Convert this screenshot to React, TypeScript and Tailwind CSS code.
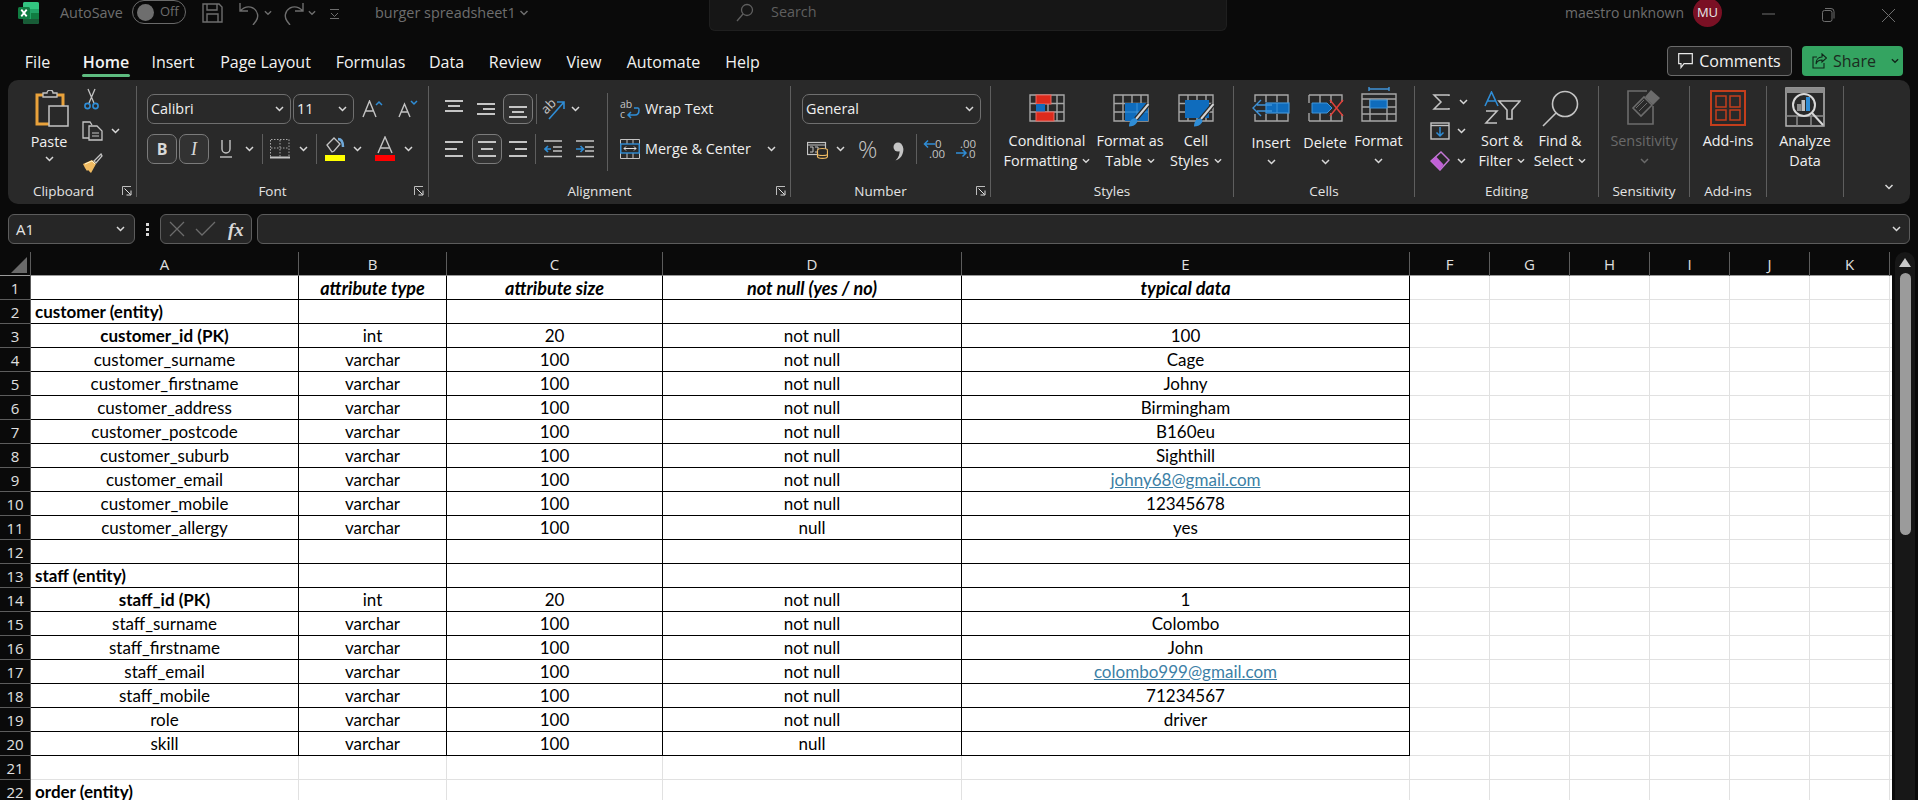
import React from "react";

const GRAY = "#c4c4c4";
const BLUE = "#2f8dd6";

const Chev = ({ color = "#d8d8d8", w = 9 }: { color?: string; w?: number }) => (
  <svg width={w} height={6} viewBox="0 0 9 6" className="shrink-0">
    <path d="M1 1l3.5 3.5L8 1" fill="none" stroke={color} strokeWidth="1.5" />
  </svg>
);

const Launcher = () => (
  <svg width="10" height="10" viewBox="0 0 10 10">
    <path d="M.5 9V.5H9" fill="none" stroke="#bdbdbd" />
    <path d="M2.5 2.5L8.5 8.5M9 4.5V9H4.5" fill="none" stroke="#e0e0e0" />
  </svg>
);

const ExcelLogo = () => (
  <svg width="21" height="22" viewBox="0 0 21 22">
    <rect x="5" y="0" width="16" height="22" rx="2" fill="#21a366" />
    <path d="M5 2a2 2 0 012-2h12a2 2 0 012 2v5H5z" fill="#33c481" />
    <path d="M13 11h8v6h-8z" fill="#107c41" />
    <path d="M5 17h16v3a2 2 0 01-2 2H7a2 2 0 01-2-2z" fill="#185c37" />
    <rect x="0" y="5" width="12" height="12" rx="1.5" fill="#107c41" />
    <path d="M3.3 7.6l5.4 6.8M8.7 7.6l-5.4 6.8" stroke="#fff" strokeWidth="1.8" />
  </svg>
);

const PasteIcon = () => (
  <svg width="34" height="37" viewBox="0 0 34 37">
    <path d="M2 5h26v29H2z" fill="none" stroke="#e9a23b" strokeWidth="3" />
    <path d="M8 6V3h4a3 3 0 016 0h4v4H8z" fill="#292929" stroke={GRAY} strokeWidth="1.3" />
    <rect x="14" y="16" width="19" height="20" fill="#292929" stroke={GRAY} strokeWidth="1.5" />
  </svg>
);

const ScissorsIcon = () => (
  <svg width="15" height="22" viewBox="0 0 15 22">
    <path d="M4 1l6 14M11 1L5 15" stroke={GRAY} strokeWidth="1.3" fill="none" />
    <circle cx="3.5" cy="18" r="2.6" fill="none" stroke={BLUE} strokeWidth="1.6" />
    <circle cx="11.5" cy="18" r="2.6" fill="none" stroke={BLUE} strokeWidth="1.6" />
  </svg>
);

const CopyIcon = () => (
  <svg width="21" height="20" viewBox="0 0 21 20">
    <path d="M9 17H1V1h7l2 3" fill="none" stroke={GRAY} strokeWidth="1.3" />
    <path d="M7 5h8l5 5v9H7z" fill="#292929" stroke={GRAY} strokeWidth="1.3" />
    <path d="M10 12h7M10 15h7" stroke={GRAY} />
  </svg>
);

const BrushIcon = () => (
  <svg width="21" height="21" viewBox="0 0 21 21">
    <path d="M12 8l7-7 1 2-6 7z" fill="none" stroke={GRAY} strokeWidth="1.3" />
    <path d="M1 11l9-4 4 4-5 9-3-3-1 1-2-3z" fill="#f0bb62" />
    <path d="M3 11l7-3 3 3" fill="none" stroke="#fff2c9" />
  </svg>
);

const AUp = ({ big, up }: { big: boolean; up: boolean }) => (
  <svg width="22" height="18" viewBox="0 0 22 18">
    <path
      d={big ? "M1 17L7.5 1 14 17M3.5 11h8" : "M2 17L7.5 4 13 17M4 12h7"}
      fill="none"
      stroke={GRAY}
      strokeWidth="1.4"
    />
    <path d={up ? "M14 5l3-3 3 3" : "M14 1l3 3 3-3"} fill="none" stroke={BLUE} strokeWidth="1.5" />
  </svg>
);

const UIcon = () => (
  <svg width="12" height="20" viewBox="0 0 12 20">
    <path d="M2 1v9a4 4 0 008 0V1" fill="none" stroke={GRAY} strokeWidth="1.4" />
    <path d="M0 18h12" stroke={GRAY} strokeWidth="1.4" />
  </svg>
);

const BorderIcon = () => (
  <svg width="20" height="20" viewBox="0 0 20 20">
    <path d="M1 .5h18v17M.5 1v17M10 1v17M1 9h18" fill="none" stroke="#a8a8a8" strokeDasharray="1.5 1.5" />
    <path d="M0 18.5h20" stroke={GRAY} strokeWidth="2" />
  </svg>
);

const FillIcon = () => (
  <svg width="21" height="26" viewBox="0 0 21 26">
    <path d="M2 9l7-7 6 6-6 7-2 1z" fill="none" stroke={GRAY} strokeWidth="1.3" />
    <path d="M13 3c3 0 5 3 5 8" fill="none" stroke="#6fa8d8" strokeWidth="2.5" />
    <rect x="0" y="19" width="20" height="6" fill="#ffff00" />
  </svg>
);

const FontColorIcon = () => (
  <svg width="20" height="26" viewBox="0 0 20 26">
    <path d="M3 17L10 1l7 16M5.5 12h9" fill="none" stroke={GRAY} strokeWidth="1.4" />
    <rect x="0" y="19" width="20" height="6" fill="#ff0000" />
  </svg>
);

const Lines = ({ kind, h = 13, gap = 5 }: { kind: "l" | "c" | "r"; h?: number; gap?: number }) => {
  const w = [18, 12, 18];
  return (
    <svg width="18" height={h} viewBox={`0 0 18 ${h}`}>
      {w.map((len, i) => {
        const x = kind === "l" ? 0 : kind === "c" ? (18 - len) / 2 : 18 - len;
        return <rect key={i} x={x} y={i * gap} width={len} height="2" fill={GRAY} />;
      })}
    </svg>
  );
};

const IndentIcon = ({ right }: { right: boolean }) => (
  <svg width="18" height="18" viewBox="0 0 18 18">
    <path d="M0 1h18M9 7h9M9 11h9M0 16.5h18" stroke={GRAY} strokeWidth="1.6" />
    <path d={right ? "M0 9h7M4.5 6l3 3-3 3" : "M7 9H1M4 6L1 9l3 3"} fill="none" stroke={BLUE} strokeWidth="1.6" />
  </svg>
);

const OrientIcon = () => (
  <svg width="24" height="24" viewBox="0 0 24 24" className="overflow-visible">
    <text x="0" y="14" fontSize="13" fill={GRAY} fontFamily="Open Sans, sans-serif" transform="rotate(-45 6 12)">
      ab
    </text>
    <path d="M6 22L21 5M14 5h7v7" fill="none" stroke={BLUE} strokeWidth="1.6" />
  </svg>
);

const WrapIcon = () => (
  <svg width="20" height="20" viewBox="0 0 20 20" className="overflow-visible">
    <text x="0" y="8.5" fontSize="10.5" fill={GRAY} fontFamily="Open Sans, sans-serif">
      ab
    </text>
    <text x="0" y="19" fontSize="10.5" fill={GRAY} fontFamily="Open Sans, sans-serif">
      c
    </text>
    <path d="M14 9h4c1 0 1 0 1 2 0 4-2 5-4 5H8M11 13l-3 3 3 3" fill="none" stroke={BLUE} strokeWidth="1.5" />
  </svg>
);

const MergeIcon = () => (
  <svg width="20" height="20" viewBox="0 0 20 20">
    <path d="M.5.5h19v19H.5zM7 .5v5M13 .5v5M7 14v5M13 14v5" fill="none" stroke={GRAY} />
    <rect x=".8" y="5" width="18.4" height="9" fill="#292929" stroke={BLUE} strokeWidth="1.4" />
    <path d="M4 9.5h12M6 7.5l-2 2 2 2M14 7.5l2 2-2 2" fill="none" stroke="#e0e0e0" />
  </svg>
);

const CurrencyIcon = () => (
  <svg width="21" height="19" viewBox="0 0 21 19">
    <rect x=".5" y="2.5" width="18" height="12" fill="none" stroke={GRAY} strokeWidth="1.2" />
    <path d="M.5 5h18" stroke={GRAY} />
    <path d="M3 7h3v5H3M8 7h3v5H8" fill="none" stroke={GRAY} />
    <ellipse cx="15.5" cy="10.5" rx="5" ry="2" fill="#292929" stroke="#f0bb62" strokeWidth="1.2" />
    <path d="M10.5 10.5v6c0 2.500 10 2.500 10 0v-6M10.500 14c0 2 10 2 10 0" fill="#292929" stroke="#f0bb62" strokeWidth="1.2" />
  </svg>
);

const CommaIcon = () => (
  <svg width="11" height="19" viewBox="0 0 11 19">
    <circle cx="5" cy="5" r="4.500" fill={GRAY} />
    <path d="M7 2c4 2 4 6 2.500 10C8.500 15 6 17.500 2.500 18.500 5.500 15.500 7 12 6.500 8.500z" fill={GRAY} />
  </svg>
);

const DecIcon = ({ inc }: { inc: boolean }) => (
  <svg width="20" height="20" viewBox="0 0 20 20" className="overflow-visible">
    {inc ? (
      <>
        <text x="4" y="9" fontSize="11.5" fill={GRAY} fontFamily="Open Sans, sans-serif">
          .00
        </text>
        <text x="10" y="19" fontSize="11.5" fill={GRAY} fontFamily="Open Sans, sans-serif">
          .0
        </text>
        <path d="M0 14h10M6.500 10.500l3.500 3.500-3.500 3.500" fill="none" stroke={BLUE} strokeWidth="1.5" />
      </>
    ) : (
      <>
        <text x="11" y="9" fontSize="11.5" fill={GRAY} fontFamily="Open Sans, sans-serif">
          0
        </text>
        <text x="5" y="19" fontSize="11.5" fill={GRAY} fontFamily="Open Sans, sans-serif">
          .00
        </text>
        <path d="M0 5h11M4 1.500L.5 5 4 8.500" fill="none" stroke={BLUE} strokeWidth="1.5" />
      </>
    )}
  </svg>
);

const GridBase = () => (
  <path d="M1 1h34v26H1zM10 1v26M19 1v26M28 1v26M1 9.500h34M1 18h34" fill="none" stroke="#a6a6a6" strokeWidth="1.4" />
);

const CondIcon = () => (
  <svg width="36" height="28" viewBox="0 0 36 28">
    <GridBase />
    <rect x="7" y="1" width="15" height="9" fill="#dc2a1c" stroke="#e86a62" />
    <rect x="7" y="10" width="9" height="8" fill="#0f6cbd" />
    <rect x="7" y="18" width="18" height="9" fill="#dc2a1c" stroke="#e86a62" />
  </svg>
);

const BrushOver = () => (
  <>
    <path d="M23 25L35.500 10" stroke="#292929" strokeWidth="4.500" />
    <path d="M23 25L35.500 10" stroke="#d4d4d4" strokeWidth="2" />
    <path d="M16 32.500c0-4 2-8 5-8 3 0 4 2 3 4-2 3-5 4-8 4z" fill="#2f8dd6" />
  </>
);

const TableIcon = () => (
  <svg width="37" height="33" viewBox="0 0 37 33" className="mb-[-5px] ml-[3px]">
    <GridBase />
    <rect x="12" y="9" width="23" height="18" fill="#0f6cbd" />
    <path d="M24 9v18M12 18h23" stroke="#3f93d8" />
    <BrushOver />
  </svg>
);

const CellStyleIcon = () => (
  <svg width="37" height="33" viewBox="0 0 37 33" className="mb-[-5px]">
    <GridBase />
    <rect x="7" y="6" width="24" height="18" fill="#0f6cbd" />
    <BrushOver />
  </svg>
);

const InsertIcon = () => (
  <svg width="38" height="28" viewBox="0 0 38 28">
    <path d="M3 8V1h33v26H3v-7M14 1v7M25 1v7M14 20v7M25 20v7" fill="none" stroke="#a6a6a6" strokeWidth="1.4" />
    <rect x="14" y="9" width="23" height="10" fill="#0f6cbd" stroke="#3f93d8" strokeWidth="1.2" />
    <path d="M25 9v10" stroke="#3f93d8" />
    <path d="M20 11H5M20 17H5M9 6l-8 8 8 8" fill="none" stroke="#3f93d8" strokeWidth="1.4" />
  </svg>
);

const DeleteIcon = () => (
  <svg width="38" height="28" viewBox="0 0 38 28">
    <path d="M3 1h33v7M3 27h33v-7M3 1v8M3 19v8M14 1v8M25 1v8M14 19v8M25 19v8" fill="none" stroke="#a6a6a6" strokeWidth="1.4" />
    <path d="M6 9h15l5 5-5 5H6z" fill="#0f6cbd" stroke="#3f93d8" />
    <path d="M24 6l13 16M37 6L24 22" stroke="#e0403a" strokeWidth="1.5" />
  </svg>
);

const FormatIcon = () => (
  <svg width="36" height="35" viewBox="0 0 36 35">
    <path d="M8 2h20M8 0v4M28 0v4" stroke="#3f93d8" strokeWidth="1.4" />
    <path d="M1 7h34v27H1zM1 7v4M1 12h34M1 20h34M1 27h34M9 12v22M26 12v22" fill="none" stroke="#a6a6a6" strokeWidth="1.4" />
    <rect x="9" y="13" width="17" height="8" fill="#0f6cbd" stroke="#3f93d8" />
  </svg>
);

const SigmaIcon = () => (
  <svg width="18" height="16" viewBox="0 0 18 16">
    <path d="M17 2V1H2l7 7-7 7h15v-1" fill="none" stroke={GRAY} strokeWidth="1.5" />
  </svg>
);

const FillDownIcon = () => (
  <svg width="20" height="18" viewBox="0 0 20 18">
    <rect x="1" y="1" width="18" height="16" fill="none" stroke={GRAY} strokeWidth="1.4" />
    <path d="M1 3.500h18" stroke={GRAY} strokeWidth="1.4" />
    <path d="M10 5v9M6.500 10.500L10 14l3.500-3.500" fill="none" stroke={BLUE} strokeWidth="1.5" />
  </svg>
);

const EraserIcon = () => (
  <svg width="20" height="20" viewBox="0 0 20 20">
    <path d="M11 1l8 8-9 10-9-9z" fill="none" stroke="#c478d6" strokeWidth="1.5" />
    <path d="M6 5.500l7.500 8L10 19l-9-9z" fill="#c060d6" />
  </svg>
);

const SortIcon = () => (
  <svg width="37" height="34" viewBox="0 0 37 34">
    <path d="M1 15L7.500 1 14 15M3.500 10h8" fill="none" stroke={BLUE} strokeWidth="1.6" />
    <path d="M2 20h11L2 32h11" fill="none" stroke={GRAY} strokeWidth="1.6" />
    <path d="M15 10h21l-8 9v9h-5v-9z" fill="none" stroke={GRAY} strokeWidth="1.6" />
  </svg>
);

const FindIcon = () => (
  <svg width="37" height="37" viewBox="0 0 37 37" className="mb-[-2px]">
    <circle cx="23" cy="14" r="12.500" fill="none" stroke={GRAY} strokeWidth="1.6" />
    <path d="M14 23L1 36" stroke={GRAY} strokeWidth="1.6" />
  </svg>
);

const SensitivityIcon = () => (
  <svg width="34" height="37" viewBox="0 0 34 37">
    <path d="M20 3H1v33h25V18" fill="none" stroke="#6c6c6c" strokeWidth="1.6" />
    <path d="M6 20l11-11 8 8-11 11z" fill="#292929" stroke="#6c6c6c" strokeWidth="1.6" />
    <path d="M9 20l8-8M12 23l8-8" stroke="#6c6c6c" />
    <path d="M18 9l6-7 9 8-7 7z" fill="#6c6c6c" />
  </svg>
);

const AddinsIcon = () => (
  <svg width="36" height="36" viewBox="0 0 36 36" className="mb-[-1px]">
    <rect x="1" y="1" width="34" height="34" fill="none" stroke="#c43e1c" strokeWidth="2" />
    <path d="M6 6h10v11H6zM20 6h10v11H20zM6 20h10v10H6zM20 20h10v10H20z" fill="none" stroke="#c43e1c" strokeWidth="1.5" />
  </svg>
);

const AnalyzeIcon = () => (
  <svg width="40" height="40" viewBox="0 0 40 40" className="mb-[-2px]">
    <path d="M1 1h38v38H1z" fill="none" stroke="#b5b5b5" strokeWidth="1.5" />
    <rect x="1" y="1" width="38" height="5" fill="#8c8c8c" />
    <path d="M1 29h38M12 29v10M26 29v10" stroke="#8c8c8c" strokeWidth="1.5" />
    <circle cx="19" cy="18" r="11" fill="#292929" stroke="#d8d8d8" strokeWidth="2" />
    <rect x="12" y="17" width="4" height="7" fill="#8c8c8c" />
    <rect x="16.500" y="13" width="3.500" height="11" fill="#c0c0c0" />
    <rect x="21" y="10" width="4" height="14" fill="#2f8dd6" />
    <path d="M27 26l11 12" stroke="#d8d8d8" strokeWidth="2" />
  </svg>
);

const Combo = ({ label, w }: { label: string; w: string }) => (
  <div className={`${w} h-[30px] flex items-center justify-between pl-[3px] pr-[6px] border border-[#6f6f6f] rounded-[7px] text-[14.4px] text-[#f0f0f0]`}>
    <span>{label}</span>
    <Chev />
  </div>
);

const ToggleBtn = ({ children }: { children: React.ReactNode }) => (
  <div className="w-[30px] h-[30px] flex items-center justify-center border border-[#7b7b7b] rounded-[7px] bg-[#323232]">
    {children}
  </div>
);

const Sep = ({ h = "h-[30px]" }: { h?: string }) => <div className={`w-px ${h} bg-[#5e5e5e]`} />;

const Group = ({
  w,
  label,
  launcher,
  pr = "pr-0",
  children,
}: {
  w: string;
  label?: string;
  launcher?: boolean;
  pr?: string;
  children: React.ReactNode;
}) => (
  <div className={`${w} h-[111px] shrink-0 flex flex-col border-r border-[#5e5e5e]`}>
    <div className="h-[95px] flex">{children}</div>
    <div className={`relative h-[16px] ${pr} text-center text-[13.5px] leading-[21px] text-[#e4e4e4]`}>
      {label}
      {launcher && (
        <span className="absolute right-[4px] top-[5px]">
          <Launcher />
        </span>
      )}
    </div>
  </div>
);

const BigBtn = ({
  w,
  icon,
  iconBox = "h-[34px]",
  labelGap = "mt-[9px]",
  chevBox = "h-[19px]",
  lines,
  chev = true,
  muted,
  inline,
}: {
  w: string;
  icon: React.ReactNode;
  iconBox?: string;
  labelGap?: string;
  chevBox?: string;
  lines: string[];
  chev?: boolean;
  muted?: boolean;
  inline?: boolean;
}) => (
  <div className={`${w} flex flex-col items-center text-[14.4px] leading-[20px] whitespace-nowrap ${muted ? "text-[#6a6a6a]" : "text-[#f0f0f0]"}`}>
    <div className={`${iconBox} flex items-end justify-center`}>{icon}</div>
    <div className={labelGap}>{lines[0]}</div>
    {lines[1] ? (
      <div className="flex items-center gap-[5px]">
        {lines[1]}
        {inline && <Chev w={8} />}
      </div>
    ) : chev ? (
      <div className={`${chevBox} flex items-center`}>
        <Chev color={muted ? "#6a6a6a" : "#d8d8d8"} />
      </div>
    ) : null}
  </div>
);

const tabs = [
  { t: "File", c: "w-[25px] ml-[25px]" },
  { t: "Home", c: "w-[48px] ml-[32px] font-semibold" },
  { t: "Insert", c: "w-[42px] ml-[22px]" },
  { t: "Page Layout", c: "w-[93px] ml-[25px]" },
  { t: "Formulas", c: "w-[69px] ml-[24px]" },
  { t: "Data", c: "w-[35px] ml-[24px]" },
  { t: "Review", c: "w-[52px] ml-[25px]" },
  { t: "View", c: "w-[36px] ml-[25px]" },
  { t: "Automate", c: "w-[75px] ml-[24px]" },
  { t: "Help", c: "w-[35px] ml-[24px]" },
];

const TitleBar = () => (
  <div className="h-[40px] flex items-start text-[14.4px] text-[#6e6e6e] whitespace-nowrap">
    <div className="ml-[18px] mt-[2px]">
      <ExcelLogo />
    </div>
    <span className="ml-[21px] mt-[2px] w-[71px]">AutoSave</span>
    <div className="w-[54px] h-[24px] flex items-center gap-[6px] px-[4px] border border-[#6a6a6a] rounded-full text-[13px] ml-[1px]">
      <span className="w-[17px] h-[17px] rounded-full bg-[#6e6e6e]" />
      Off
    </div>
    <svg width="21" height="20" viewBox="0 0 21 20" className="ml-[16px] mt-[3px]">
      <path d="M1 1h16l3 3v15H1zM5 1v6h10V1M5 19v-8h11v8" fill="none" stroke="#6e6e6e" strokeWidth="1.4" />
    </svg>
    <svg width="23" height="24" viewBox="0 0 23 24" className="ml-[15px] mt-[1px]">
      <path d="M2 2v8h8M2 10c4-4 9-5 13-3 5 3 6 9 3 13l-3 4" fill="none" stroke="#6e6e6e" strokeWidth="1.4" />
    </svg>
    <div className="ml-[3px] mt-[10px]"><Chev color="#6e6e6e" w={8} /></div>
    <svg width="23" height="24" viewBox="0 0 23 24" className="ml-[10px] mt-[1px]">
      <path d="M21 2v8h-8M21 10c-4-4-9-5-13-3-5 3-6 9-3 13l3 4" fill="none" stroke="#6e6e6e" strokeWidth="1.4" />
    </svg>
    <div className="ml-[3px] mt-[10px]"><Chev color="#6e6e6e" w={8} /></div>
    <svg width="9" height="10" viewBox="0 0 9 10" className="ml-[14px] mt-[9px]">
      <path d="M0 .5h9M1 4l3.500 3.500L8 4M0 9.500h9" fill="none" stroke="#6e6e6e" />
    </svg>
    <span className="ml-[36px] mt-[2px] w-[136px]">burger spreadsheet1</span>
    <div className="ml-[8px] mt-[10px]"><Chev color="#6e6e6e" w={10} /></div>
    <div className="ml-[180px] w-[518px] h-[31px] flex items-start pt-[1px] bg-[#161616] border border-[#1f1f1f] border-t-0 rounded-b-[6px] text-[#5f5f5f]">
      <svg width="18" height="20" viewBox="0 0 18 20" className="ml-[26px] mt-[2px]">
        <circle cx="11" cy="7" r="5.500" fill="none" stroke="#5f5f5f" strokeWidth="1.3" />
        <path d="M7 11l-6 7" stroke="#5f5f5f" strokeWidth="1.3" />
      </svg>
      <span className="ml-[17px]">Search</span>
    </div>
    <span className="ml-[338px] mt-[2px] w-[118px] text-[14px]">maestro unknown</span>
    <div className="ml-[10px] -mt-[2px] w-[29px] h-[29px] rounded-full bg-[#7a1024] flex items-center justify-center text-[13px] text-[#e8e8e8]">
      MU
    </div>
    <svg width="13" height="2" viewBox="0 0 13 2" className="ml-[40px] mt-[13px]">
      <path d="M0 1h13" stroke="#6e6e6e" />
    </svg>
    <svg width="13" height="14" viewBox="0 0 13 14" className="ml-[47px] mt-[8px]">
      <rect x=".5" y="2.500" width="9.500" height="11" rx="2" fill="none" stroke="#6e6e6e" />
      <path d="M3 .5h6a3 3 0 013 3v7" fill="none" stroke="#6e6e6e" />
    </svg>
    <svg width="13" height="13" viewBox="0 0 13 13" className="ml-[47px] mt-[9px]">
      <path d="M0 0l13 13M13 0L0 13" stroke="#6e6e6e" />
    </svg>
  </div>
);

const MenuBar = () => (
  <div className="h-[40px] flex items-start text-[16px] text-[#f2f2f2] whitespace-nowrap">
    {tabs.map((tab) => (
      <div key={tab.t} className={`relative h-[40px] flex justify-center pt-[10px] ${tab.c}`}>
        {tab.t}
        {tab.t === "Home" && <span className="absolute left-0 right-0 top-[34px] h-[3px] rounded-full bg-[#5dbb7f]" />}
      </div>
    ))}
    <div className="ml-auto mt-[6px] w-[125px] h-[30px] flex items-center justify-center gap-[6px] border border-[#6a6a6a] rounded-[4px] bg-[#222222]">
      <svg width="15" height="16" viewBox="0 0 15 16">
        <path d="M.7.7h13.600v10H6L3 14.500v-3.800H.7z" fill="none" stroke="#e8e8e8" strokeWidth="1.2" />
      </svg>
      Comments
    </div>
    <div className="ml-[10px] mr-[15px] mt-[6px] w-[101px] h-[30px] flex items-center gap-[6px] pl-[10px] rounded-[4px] bg-[#34a461] text-[#1b2b20]">
      <svg width="15" height="16" viewBox="0 0 15 16">
        <path d="M10 1l4.500 4-4.500 4V7C7 7 5 8 4 11c0-4 2-7 6-7zM12 10v5H1V4h4" fill="none" stroke="#10261a" strokeWidth="1.1" />
      </svg>
      Share
      <span className="ml-[9px]"><Chev color="#10261a" w={8} /></span>
    </div>
  </div>
);

const Ribbon = () => (
  <div className="mx-[8px] h-[124px] px-0 pt-[6px] flex rounded-[10px] bg-[#292929] text-[#f0f0f0] whitespace-nowrap">
    <Group w="w-[129px]" label="Clipboard" launcher pr="pr-[17px]">
      <div className="ml-[12px] w-[58px] flex flex-col items-center text-[14.4px]">
        <div className="mt-[4px] ml-[6px]"><PasteIcon /></div>
        <div className="mt-[5px] leading-[20px]">Paste</div>
        <div className="mt-[4px]"><Chev /></div>
      </div>
      <div className="ml-[4px] flex flex-col">
        <div className="ml-[2px] mt-[2px]"><ScissorsIcon /></div>
        <div className="mt-[11px] flex items-center">
          <CopyIcon />
          <span className="ml-[8px]"><Chev /></span>
        </div>
        <div className="mt-[12px]"><BrushIcon /></div>
      </div>
    </Group>

    <Group w="w-[292px]" label="Font" launcher pr="pr-[20px]">
      <div className="ml-[10px] mt-[8px] flex flex-col gap-[10px]">
        <div className="flex items-center">
          <Combo label="Calibri" w="w-[144px]" />
          <div className="ml-[2px]"><Combo label="11" w="w-[61px]" /></div>
          <div className="ml-[8px]"><AUp big up /></div>
          <div className="ml-[13px]"><AUp big={false} up={false} /></div>
        </div>
        <div className="flex items-center">
          <ToggleBtn><span className="font-bold text-[16px] text-[#d8d8d8]">B</span></ToggleBtn>
          <div className="ml-[2px]">
            <ToggleBtn><span className="italic font-['Liberation_Serif',serif] text-[18px] text-[#d8d8d8]">I</span></ToggleBtn>
          </div>
          <div className="ml-[11px]"><UIcon /></div>
          <div className="ml-[13px]"><Chev /></div>
          <div className="ml-[8px]"><Sep /></div>
          <div className="ml-[7px]"><BorderIcon /></div>
          <div className="ml-[9px]"><Chev /></div>
          <div className="ml-[8px]"><Sep /></div>
          <div className="ml-[8px]"><FillIcon /></div>
          <div className="ml-[7px]"><Chev /></div>
          <div className="ml-[13px]"><FontColorIcon /></div>
          <div className="ml-[9px]"><Chev /></div>
        </div>
      </div>
    </Group>

    <Group w="w-[362px]" label="Alignment" launcher pr="pr-[20px]">
      <div className="w-[178px] shrink-0 mt-[8px] pl-[16px] flex flex-col gap-[10px]">
        <div className="flex items-center h-[30px]">
          <div className="-mt-[6px]"><Lines kind="c" /></div>
          <div className="ml-[14px]"><Lines kind="r" /></div>
          <div className="ml-[8px]">
            <ToggleBtn><div className="mt-[6px]"><Lines kind="c" /></div></ToggleBtn>
          </div>
          <div className="ml-[3px]"><Sep /></div>
          <div className="ml-[6px]"><OrientIcon /></div>
          <div className="ml-[4px]"><Chev /></div>
        </div>
        <div className="flex items-center h-[30px]">
          <Lines kind="l" h={17} gap={7} />
          <div className="ml-[9px]">
            <ToggleBtn><Lines kind="c" h={17} gap={7} /></ToggleBtn>
          </div>
          <div className="ml-[7px]"><Lines kind="r" h={17} gap={7} /></div>
          <div className="ml-[8px]"><Sep /></div>
          <div className="ml-[8px]"><IndentIcon right={false} /></div>
          <div className="ml-[14px]"><IndentIcon right /></div>
        </div>
      </div>
      <div className="w-px h-[78px] mt-[7px] bg-[#5e5e5e]" />
      <div className="mt-[8px] pl-[12px] flex flex-col gap-[10px] text-[14.4px]">
        <div className="h-[30px] flex items-center gap-[5px]">
          <WrapIcon />
          Wrap Text
        </div>
        <div className="h-[30px] flex items-center gap-[5px]">
          <MergeIcon />
          Merge &amp; Center
          <span className="ml-[11px]"><Chev /></span>
        </div>
      </div>
    </Group>

    <Group w="w-[200px]" label="Number" launcher pr="pr-[20px]">
      <div className="mt-[8px] flex flex-col gap-[10px]">
        <div className="ml-[11px]"><Combo label="General" w="w-[179px]" /></div>
        <div className="ml-[16px] h-[30px] flex items-center">
          <CurrencyIcon />
          <div className="ml-[8px]"><Chev /></div>
          <span className="ml-[13px] font-light text-[24px] leading-none text-[#c4c4c4]">%</span>
          <div className="ml-[16px] mt-[4px]"><CommaIcon /></div>
          <div className="ml-[12px]"><Sep /></div>
          <div className="ml-[7px]"><DecIcon inc={false} /></div>
          <div className="ml-[12px]"><DecIcon inc /></div>
        </div>
      </div>
    </Group>

    <Group w="w-[243px]" label="Styles">
      <div className="ml-[12px] mt-[2px] flex">
        <BigBtn w="w-[88px]" icon={<CondIcon />} lines={["Conditional", "Formatting"]} inline />
        <BigBtn w="w-[78px]" icon={<TableIcon />} lines={["Format as", "Table"]} inline />
        <BigBtn w="w-[54px]" icon={<CellStyleIcon />} lines={["Cell", "Styles"]} inline />
      </div>
    </Group>

    <Group w="w-[181px]" label="Cells">
      <div className="ml-[10px] mt-[2px] flex">
        <BigBtn w="w-[54px]" labelGap="mt-[11px]" chevBox="h-[17px]" icon={<InsertIcon />} lines={["Insert"]} />
        <BigBtn w="w-[54px]" labelGap="mt-[11px]" chevBox="h-[17px]" icon={<DeleteIcon />} lines={["Delete"]} />
        <BigBtn w="w-[53px]" icon={<FormatIcon />} lines={["Format"]} />
      </div>
    </Group>

    <Group w="w-[184px]" label="Editing">
      <div className="ml-[15px] mt-[6px] flex flex-col w-[43px]">
        <div className="h-[20px] flex items-center">
          <span className="ml-[2px]"><SigmaIcon /></span>
          <span className="ml-[9px]"><Chev /></span>
        </div>
        <div className="mt-[10px] h-[18px] flex items-center">
          <FillDownIcon />
          <span className="ml-[7px]"><Chev /></span>
        </div>
        <div className="mt-[11px] h-[20px] flex items-center">
          <EraserIcon />
          <span className="ml-[7px]"><Chev /></span>
        </div>
      </div>
      <div className="mt-[2px] flex">
        <BigBtn w="w-[58px]" iconBox="h-[37px]" labelGap="mt-[6px]" icon={<SortIcon />} lines={["Sort &", "Filter"]} inline />
        <BigBtn w="w-[58px]" iconBox="h-[37px]" labelGap="mt-[6px]" icon={<FindIcon />} lines={["Find &", "Select"]} inline />
      </div>
    </Group>

    <Group w="w-[91px]" label="Sensitivity">
      <div className="w-full mt-[2px] flex justify-center">
        <BigBtn w="w-full" iconBox="h-[37px]" labelGap="mt-[6px]" icon={<SensitivityIcon />} lines={["Sensitivity"]} muted />
      </div>
    </Group>

    <Group w="w-[77px]" label="Add-ins">
      <div className="w-full mt-[2px]">
        <BigBtn w="w-full" iconBox="h-[37px]" labelGap="mt-[6px]" icon={<AddinsIcon />} lines={["Add-ins"]} chev={false} />
      </div>
    </Group>

    <Group w="w-[77px]">
      <div className="w-full mt-[2px]">
        <BigBtn w="w-full" iconBox="h-[37px]" labelGap="mt-[6px]" icon={<AnalyzeIcon />} lines={["Analyze", "Data"]} />
      </div>
    </Group>

    <div className="flex-1 flex justify-end items-end pr-[15px] pb-[14px]">
      <Chev w={12} />
    </div>
  </div>
);

const FormulaBar = () => (
  <div className="mt-[10px] mb-[8px] mx-[8px] h-[30px] flex text-[15px] text-[#e4e4e4]">
    <div className="w-[127px] flex items-center justify-between pl-[7px] pr-[7px] border border-[#5c5c5c] rounded-[6px] bg-[#262626]">
      A1
      <Chev w={13} />
    </div>
    <div className="w-[25px] flex flex-col items-center justify-center gap-[2px]">
      <span className="w-[3px] h-[3px] bg-[#d8d8d8]" />
      <span className="w-[3px] h-[3px] bg-[#d8d8d8]" />
      <span className="w-[3px] h-[3px] bg-[#d8d8d8]" />
    </div>
    <div className="w-[92px] flex items-center pl-[8px] border border-[#5c5c5c] rounded-[6px] bg-[#262626]">
      <svg width="16" height="16" viewBox="0 0 16 16">
        <path d="M1 1l14 14M15 1L1 15" stroke="#6c6c6c" strokeWidth="1.3" />
      </svg>
      <svg width="21" height="16" viewBox="0 0 21 16" className="ml-[10px]">
        <path d="M1 8l6 6L20 1" fill="none" stroke="#6c6c6c" strokeWidth="1.3" />
      </svg>
      <span className="ml-[12px] font-['Liberation_Serif',serif] italic font-bold text-[19px] leading-none text-[#d8d8d8]">fx</span>
    </div>
    <div className="ml-[5px] flex-1 flex items-center justify-end pr-[6px] border border-[#5c5c5c] rounded-[6px] bg-[#262626]">
      <Chev w={13} />
    </div>
  </div>
);

type Row = { a?: string; b?: string; c?: string; d?: string; e?: string; kind?: "head" | "entity" | "pk"; link?: boolean; plain?: boolean };

const vc = { b: "varchar", c: "100", d: "not null" };

const rows: Row[] = [
  { b: "attribute type", c: "attribute size", d: "not null (yes / no)", e: "typical data", kind: "head" },
  { a: "customer (entity)", kind: "entity" },
  { a: "customer_id (PK)", b: "int", c: "20", d: "not null", e: "100", kind: "pk" },
  { a: "customer_surname", ...vc, e: "Cage" },
  { a: "customer_firstname", ...vc, e: "Johny" },
  { a: "customer_address", ...vc, e: "Birmingham" },
  { a: "customer_postcode", ...vc, e: "B160eu" },
  { a: "customer_suburb", ...vc, e: "Sighthill" },
  { a: "customer_email", ...vc, e: "johny68@gmail.com", link: true },
  { a: "customer_mobile", ...vc, e: "12345678" },
  { a: "customer_allergy", b: "varchar", c: "100", d: "null", e: "yes" },
  {},
  { a: "staff (entity)", kind: "entity" },
  { a: "staff_id (PK)", b: "int", c: "20", d: "not null", e: "1", kind: "pk" },
  { a: "staff_surname", ...vc, e: "Colombo" },
  { a: "staff_firstname", ...vc, e: "John" },
  { a: "staff_email", ...vc, e: "colombo999@gmail.com", link: true },
  { a: "staff_mobile", ...vc, e: "71234567" },
  { a: "role", ...vc, e: "driver" },
  { a: "skill", b: "varchar", c: "100", d: "null" },
  { plain: true },
  { a: "order (entity)", kind: "entity", plain: true },
];

const COLS = "grid grid-cols-[31px_268px_148px_216px_299px_448px_repeat(6,80px)_2px] grid-rows-[24px]";
const letters = ["A", "B", "C", "D", "E", "F", "G", "H", "I", "J", "K"];

const Sheet = () => (
  <div className="flex-1 flex min-h-0">
    <div className="w-[1892px] shrink-0">
      <div className={`${COLS} h-[24px] border-b border-[#9a9a9a] text-[15px] text-[#e0e0e0]`}>
        <div className="flex items-end justify-end pr-[3px] pb-[3px] border-r border-[#5c5c5c]">
          <svg width="16" height="16" viewBox="0 0 16 16">
            <path d="M16 0v16H0z" fill="#6a6a6a" />
          </svg>
        </div>
        {letters.map((l) => (
          <div key={l} className="flex items-center justify-center border-r border-[#5c5c5c]">
            {l}
          </div>
        ))}
        <div />
      </div>
      {rows.map((r, i) => {
        const line = r.plain ? "border-[#e1e1e1]" : "border-black";
        const head = r.kind === "head" ? "font-bold italic text-[18px]" : "";
        const cell = `flex items-center justify-center leading-[20px] border-r border-b bg-white text-black ${line} ${head}`;
        return (
          <div key={i} className={`${COLS} h-[24px] font-['Lato',sans-serif] text-[17px]`}>
            <div className="flex items-center justify-center leading-[20px] border-r border-b border-[#5c5c5c] font-['Open_Sans',sans-serif] text-[15px] text-[#e0e0e0]">
              {i + 1}
            </div>
            <div className={`${cell} ${r.kind === "entity" ? "!justify-start pl-[4px] font-bold" : ""} ${r.kind === "pk" ? "font-bold" : ""}`}>{r.a}</div>
            <div className={cell}>{r.b}</div>
            <div className={cell}>{r.c}</div>
            <div className={cell}>{r.d}</div>
            <div className={`${cell} ${r.link ? "underline !text-[#3c7fa6]" : ""}`}>{r.e}</div>
            {["f", "g", "h", "i", "j", "k"].map((c) => (
              <div key={c} className="bg-white border-r border-b border-[#e1e1e1]" />
            ))}
            <div className="bg-white border-b border-[#e1e1e1]" />
          </div>
        );
      })}
    </div>
    <div className="ml-[3px] w-[20px] flex flex-col items-center rounded-t-full bg-[#171717]">
      <svg width="12" height="9" viewBox="0 0 12 9" className="mt-[6px]">
        <path d="M6 0l6 9H0z" fill="#c8c8c8" />
      </svg>
      <div className="mt-[6px] w-[11px] h-[262px] rounded-full bg-[#9b9b9b]" />
    </div>
  </div>
);

export default function App() {
  return (
    <div className="w-[1918px] h-[800px] flex flex-col overflow-hidden bg-[#0a0a0a] font-['Open_Sans',sans-serif]">
      <TitleBar />
      <MenuBar />
      <Ribbon />
      <FormulaBar />
      <Sheet />
    </div>
  );
}
